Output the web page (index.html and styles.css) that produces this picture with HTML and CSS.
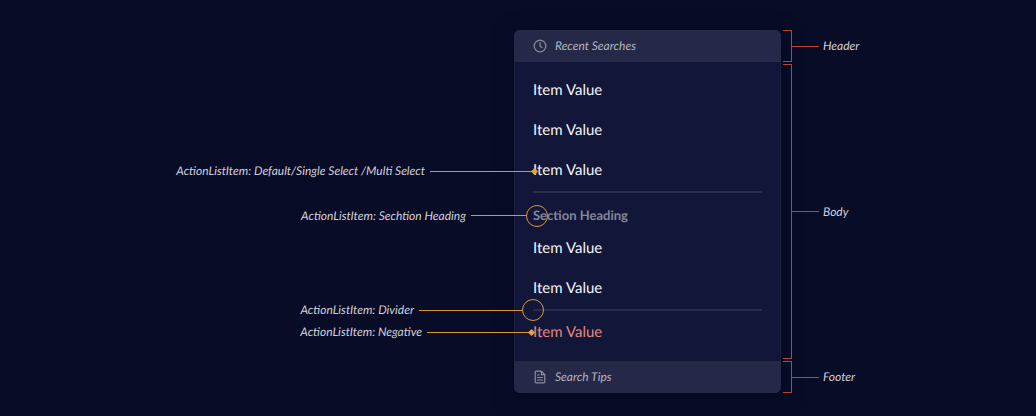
FILE: index.html
```html
<!DOCTYPE html>
<html lang="en">
<head>
<meta charset="utf-8">
<title>ActionList anatomy</title>
<link rel="stylesheet" href="styles.css">
</head>
<body>
<main class="anatomy">
  <section class="panel">
    <header class="bar">
      <svg class="bar-icon" viewBox="0 0 14 14" aria-hidden="true"><circle cx="7" cy="7" r="5.800"/><path d="M7 3.400V7l2 1.600"/></svg>
      <span>Recent Searches</span>
    </header>
    <div class="list">
      <div class="item">Item Value</div>
      <div class="item">Item Value</div>
      <div class="item">Item Value
        <div class="callout callout-dot"><span>ActionListItem: Default/Single Select /Multi Select</span><i class="leader leader-long"></i><i class="dot"></i></div>
      </div>
      <div class="divider divider-section"></div>
      <h2 class="heading">Section Heading
        <div class="callout callout-heading"><span>ActionListItem: Sechtion Heading</span><i class="leader leader-short"></i><i class="ring"></i></div>
      </h2>
      <div class="item">Item Value</div>
      <div class="item">Item Value</div>
      <div class="divider">
        <div class="callout callout-divider"><span>ActionListItem: Divider</span><i class="leader leader-long"></i><i class="ring"></i></div>
      </div>
      <div class="item negative">Item Value
        <div class="callout callout-negative"><span>ActionListItem: Negative</span><i class="leader leader-long"></i><i class="dot"></i></div>
      </div>
    </div>
    <footer class="bar">
      <svg class="bar-icon" viewBox="0 0 14 14" aria-hidden="true"><path d="M2.200 2.200a1 1 0 0 1 1-1h5.200l3.400 3.400v7.200a1 1 0 0 1-1 1H3.200a1 1 0 0 1-1-1zM8.400 1.200v3.400h3.400M4.500 5h1.500M4.500 7.500h5M4.500 10h5"/></svg>
      <span>Search Tips</span>
    </footer>
  </section>
  <aside class="regions">
    <div class="region"><i class="bracket"></i><i class="stem"></i><span>Header</span></div>
    <div class="region region-body"><i class="bracket"></i><i class="stem"></i><span>Body</span></div>
    <div class="region"><i class="bracket"></i><i class="stem"></i><span>Footer</span></div>
  </aside>
</main>
</body>
</html>
```
FILE: styles.css
```css
* { box-sizing: border-box; }

body {
  margin: 0;
  min-height: 100vh;
  background: #090c27;
  color: #d0d1d9;
  font: italic 12px/16px Lato, sans-serif;
  text-rendering: geometricPrecision;
}

.anatomy {
  display: grid;
  grid-template-columns: minmax(0, 514fr) 267px minmax(0, 255fr);
  padding: 30px 0 23px;
}

.panel {
  grid-column: 2;
  border-radius: 6px;
  background: #121638;
  box-shadow: inset 0 0 0 1px #1b2040, 0 4px 20px #060921;
}

.bar {
  display: flex;
  align-items: center;
  gap: 8px;
  height: 32px;
  padding: 0 19px;
  background: #252846;
  color: #b3b4c1;
}

header.bar { border-radius: 6px 6px 0 0; }
footer.bar { border-radius: 0 0 6px 6px; }

.bar-icon {
  width: 14px;
  height: 14px;
  fill: none;
  stroke: #8c8e9f;
  stroke-width: 1.2;
  stroke-linejoin: round;
  stroke-linecap: round;
}

.list { padding: 8px 19px 9px; }

.item {
  position: relative;
  color: #f4f4f7;
  font-style: normal;
  font-size: 15px;
  line-height: 40px;
}

.negative { color: #e38880; }

.heading {
  position: relative;
  margin: 0;
  color: #85879b;
  font-style: normal;
  font-weight: 700;
  font-size: 13px;
  line-height: 25px;
}

.divider {
  position: relative;
  height: 2px;
  margin: 1px 0;
  background: #292c4b;
}

.divider-section { margin-bottom: 10px; }

.callout {
  position: absolute;
  top: 50%;
  right: 100%;
  display: flex;
  align-items: center;
  height: 22px;
  margin-top: -10px;
  color: #d0d1d9;
  font: italic 12px/16px Lato, sans-serif;
  white-space: nowrap;
}

.callout-dot { margin-right: -4px; }
.callout-negative { margin-right: -1px; margin-top: -11px; }
.callout-heading { margin-right: -15px; margin-top: -11px; }
.callout-divider { margin-right: -11px; margin-top: -11px; }

.leader {
  height: 1px;
  margin-left: 5px;
  background: #da9636;
}

.leader-long { width: 103px; }
.leader-short { width: 55px; }

.dot {
  width: 5px;
  height: 5px;
  margin-left: -1px;
  background: #e9a23b;
  transform: rotate(45deg);
}

.ring {
  width: 22px;
  height: 22px;
  border: 1px solid #da9636;
  border-radius: 50%;
}

.regions {
  display: flex;
  flex-direction: column;
  gap: 2px;
  padding-left: 2px;
}

.region {
  display: flex;
  align-items: center;
  height: 32px;
}

.region-body {
  flex: 1;
}

.bracket {
  align-self: stretch;
  width: 9px;
  border: 1px solid #b8432f;
  border-left: 0;
}

.stem {
  width: 27px;
  height: 1px;
  margin-right: 4px;
  background: #b8432f;
}
```
